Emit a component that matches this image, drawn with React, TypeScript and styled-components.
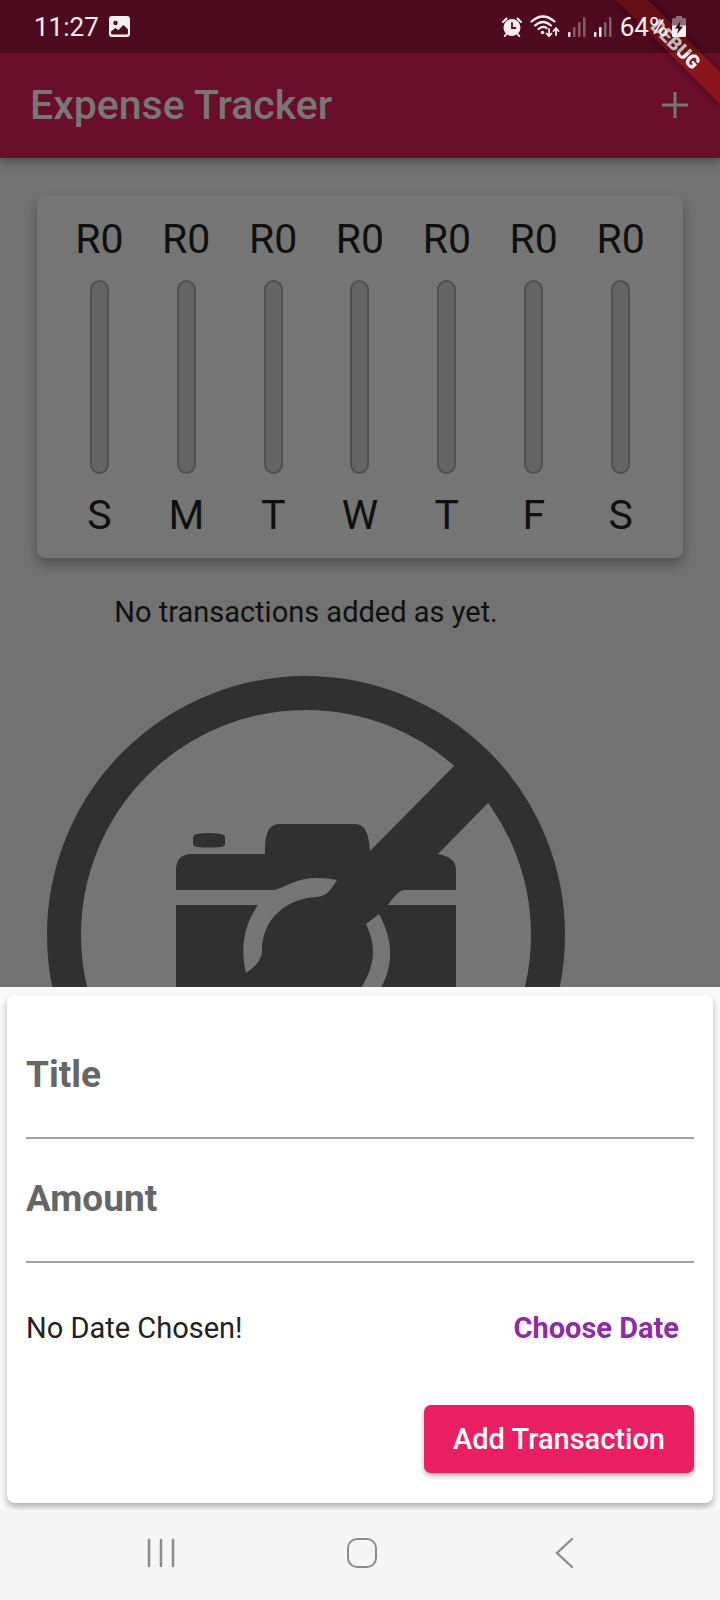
import React from "react";
import styled, { createGlobalStyle } from "styled-components";

const GlobalStyle = createGlobalStyle`
  *, *::before, *::after { box-sizing: border-box; }
  body { margin: 0; font-family: Roboto, "Liberation Sans", sans-serif; background: #727272; }
  button, input { font: inherit; }
`;

const Page = styled.div`
  display: flex;
  flex-direction: column;
  height: 100vh;
`;

const Header = styled.header`
  position: relative;
  z-index: 1;
  flex: none;
  background: #6a0e2b;
  box-shadow: 0 4px 8px rgba(0, 0, 0, 0.3);
`;

const StatusBar = styled.div`
  position: relative;
  z-index: 2;
  display: flex;
  align-items: center;
  justify-content: space-between;
  height: 53px;
  padding: 0 34px;
  background: rgba(0, 0, 0, 0.26);
  color: #fbeef2;
  font-size: 26px;
  line-height: 32px;
`;

const StatusGroup = styled.div<{ $gap: number }>`
  display: flex;
  align-items: center;
  gap: ${(p) => p.$gap}px;
`;

const StatusIcon = styled.svg`
  display: block;
  flex: none;
`;

const Battery = styled.span`
  display: flex;
  align-items: center;
  gap: 4px;
`;

const AppBar = styled.div`
  display: flex;
  align-items: center;
  justify-content: space-between;
  height: 105px;
  padding: 0 30px 2px;
  color: #777777;
`;

const AppTitle = styled.h1`
  margin: 0;
  font-size: 41px;
  line-height: 48px;
  font-weight: 500;
`;

const IconButton = styled.button`
  display: grid;
  place-items: center;
  padding: 0;
  border: 0;
  background: none;
  color: inherit;
`;

const DebugRibbon = styled.svg`
  position: absolute;
  z-index: 1;
  top: 0;
  right: 0;
  pointer-events: none;
`;

const Content = styled.main`
  flex: 1 1 0;
  min-height: 0;
  overflow: hidden;
  padding-top: 38px;
  background: #727272;
`;

const ChartCard = styled.section`
  display: grid;
  grid-template-columns: repeat(7, 1fr);
  margin: 0 37px;
  padding: 19px;
  border-radius: 8px;
  background: #757575;
  box-shadow: 0 6px 12px rgba(0, 0, 0, 0.3);
`;

const ChartColumn = styled.div`
  display: flex;
  flex-direction: column;
  align-items: center;
  gap: 17px;
`;

const ChartLabel = styled.span`
  color: #101010;
  font-size: 41px;
  line-height: 48px;
`;

const ChartBar = styled.div`
  width: 19px;
  height: 194px;
  border: 2px solid #505050;
  border-radius: 10px;
  background: #646464;
`;

const EmptyState = styled.section`
  width: 85%;
  margin-top: 34px;
`;

const EmptyText = styled.p`
  margin: 0 0 28px;
  color: #101010;
  font-size: 29px;
  line-height: 40px;
  text-align: center;
`;

const NoPhoto = styled.svg`
  display: block;
  width: 100%;
`;

const Sheet = styled.section`
  flex: none;
  padding: 8px 7px 7px;
  background: #fafafa;
  overflow: hidden;
`;

const FormCard = styled.form`
  display: flex;
  flex-direction: column;
  padding: 20px 19px 18px;
  border-radius: 8px;
  background: #ffffff;
  box-shadow: 0 4px 7px rgba(0, 0, 0, 0.3);
`;

const Field = styled.div`
  display: grid;
  height: 124px;
  border-bottom: 2px solid #a0a0a0;
`;

const FieldLabel = styled.label`
  grid-area: 1 / 1;
  align-self: center;
  padding-bottom: 2px;
  color: #666666;
  font-size: 37px;
  line-height: 44px;
  font-weight: 700;
`;

const FieldInput = styled.input`
  grid-area: 1 / 1;
  min-width: 0;
  padding: 0;
  border: 0;
  outline: 0;
  background: none;
  color: #222222;
  font-size: 37px;
`;

const DateRow = styled.div`
  display: flex;
  align-items: center;
  justify-content: space-between;
  height: 130px;
  color: #212121;
  font-size: 29px;
  line-height: 32px;
`;

const TextButton = styled.button`
  padding: 16px 15px;
  border: 0;
  background: none;
  color: #8f2aa8;
  font-weight: 700;
`;

const SubmitButton = styled.button`
  align-self: flex-end;
  height: 68px;
  margin: 12px 0;
  padding: 0 29px;
  border: 0;
  border-radius: 7px;
  background: #e91e63;
  color: #ffffff;
  font-size: 29px;
  line-height: 32px;
  font-weight: 500;
  box-shadow: 0 3px 5px rgba(0, 0, 0, 0.3);
`;

const NavBar = styled.nav`
  position: relative;
  display: grid;
  grid-template-columns: repeat(3, 1fr);
  flex: none;
  height: 90px;
  padding: 0 56px 4px 60px;
  background: #f5f5f5;
  color: #8c8c8c;
`;

const days = ["S", "M", "T", "W", "T", "F", "S"];

function SignalIcon({ level }: { level: number }) {
  const bars = [5, 10, 15, 20];
  return (
    <StatusIcon width="18" height="20" viewBox="0 0 18 20" fill="currentColor">
      {bars.map((h, i) => (
        <rect key={h} x={i * 5} y={20 - h} width="2.500" height={h} rx="1" opacity={i < level ? 1 : 0.35} />
      ))}
    </StatusIcon>
  );
}

function PhotoIcon() {
  return (
    <StatusIcon width="21" height="21" viewBox="0 0 21 21">
      <path
        fill="currentColor"
        fillRule="evenodd"
        d="M3 0H18Q21 0 21 3V18Q21 21 18 21H3Q0 21 0 18V3Q0 0 3 0ZM6.500 4.800A2.200 2.200 0 1 0 6.500 9.200A2.200 2.200 0 1 0 6.500 4.800ZM2 17Q2 18.500 3.500 18.500H17.500Q19 18.500 19 17V13.500L15.200 9.600Q14.500 9 13.800 9.600L9.300 14.200L7.300 12.400Q6.500 11.800 5.700 12.400L2 15.600Z"
      />
    </StatusIcon>
  );
}

function AlarmIcon() {
  return (
    <StatusIcon width="20" height="20" viewBox="0 0 20 20" fill="none" stroke="currentColor" strokeLinecap="round">
      <circle cx="10" cy="10.500" r="8.500" fill="currentColor" stroke="none" />
      <path d="M1 5L4.500 1.500M19 5L15.500 1.500M4 17.500L2.800 19M16 17.500L17.200 19" strokeWidth="2" />
      <path d="M10 6V11H13.500" stroke="#4e0a20" strokeWidth="1.800" />
    </StatusIcon>
  );
}

function WifiIcon() {
  return (
    <StatusIcon width="30" height="23" viewBox="0 0 30 23" fill="none" stroke="currentColor" strokeLinecap="round">
      <path d="M1.500 6.500Q13 -3.500 24.500 6.500M5 10.500Q13 3.500 21 10.500M8.500 14Q13 10.500 16.500 13" strokeWidth="2.200" />
      <circle cx="12.500" cy="17.500" r="1.800" fill="currentColor" stroke="none" />
      <path d="M19 14V21M16.500 18.500L19 21.200L21.500 18.500M26 20V13.500M23.500 16L26 13.200L28.500 16" strokeWidth="1.800" />
    </StatusIcon>
  );
}

function BatteryIcon() {
  return (
    <StatusIcon width="14" height="21" viewBox="0 0 14 21">
      <path d="M4 0H10V2H12.500Q14 2 14 3.500V19.500Q14 21 12.500 21H1.500Q0 21 0 19.500V3.500Q0 2 1.500 2H4Z" fill="#8d6b75" />
      <path d="M0 9.500H14V19.500Q14 21 12.500 21H1.500Q0 21 0 19.500Z" fill="currentColor" />
      <path d="M8.500 5L3 12.500H6.500L5 18L11 10.500H7.500Z" fill="#2b0511" />
    </StatusIcon>
  );
}

function DebugBanner() {
  return (
    <DebugRibbon width="120" height="120" viewBox="0 0 120 120">
      <defs>
        <filter id="ribbonShadow" x="-20%" y="-20%" width="140%" height="140%">
          <feGaussianBlur stdDeviation="3" />
        </filter>
      </defs>
      <path d="M15 0H49L120 71V105Z" fill="#2a0410" opacity="0.6" filter="url(#ribbonShadow)" />
      <path d="M16 0H48L120 72V104Z" fill="#8c151b" />
      <text
        transform="translate(76 44) rotate(45)"
        y="7"
        textAnchor="middle"
        fill="#ffffff"
        fontSize="19"
        fontWeight="900"
      >
        DEBUG
      </text>
    </DebugRibbon>
  );
}

function NoPhotoArt() {
  return (
    <NoPhoto viewBox="0 660 612 550" role="img" aria-label="No image available">
      <circle cx="306" cy="935" r="242" fill="#757575" stroke="#303030" strokeWidth="34" />
      <g fill="#303030">
        <path d="M193 837Q193 835 197 834Q209 832 221 834Q225 835 225 837V844Q225 846 221 847Q209 848 197 847Q193 846 193 844Z" />
        <path d="M176 890V870Q176 854 192 854H265C265 836 267 824 280 824H355C367 824 369 838 370 851L453 767L475 750L505 780L488 803L438 854Q456 857 456 870V890H404Q397 891 388 905H456V1060H270L159 1103L123 1067L176 1012V905H258Z" />
      </g>
      <g fill="#757575">
        <path d="M176 890H275C290 885 297 878 317 878Q328 878 337 880Q329 894 322 896L317 897C286 898 262 920 262 950Q262 963 246 973C240 948 244 925 258 905H176Z" />
        <path d="M366 924L379 914C393 940 394 963 381 988Q372 1003 364 1010L350 1004L361 988C377 963 375 943 366 924Z" />
      </g>
    </NoPhoto>
  );
}

export default function App() {
  return (
    <>
      <GlobalStyle />
      <Page>
        <Header>
          <StatusBar>
            <StatusGroup $gap={10}>
              <span>11:27</span>
              <PhotoIcon />
            </StatusGroup>
            <StatusGroup $gap={8}>
              <AlarmIcon />
              <WifiIcon />
              <SignalIcon level={1} />
              <SignalIcon level={2} />
              <Battery>
                <span>64%</span>
                <BatteryIcon />
              </Battery>
            </StatusGroup>
          </StatusBar>
          <AppBar>
            <AppTitle>Expense Tracker</AppTitle>
            <IconButton type="button" aria-label="Add transaction">
              <svg width="30" height="30" viewBox="0 0 30 30" stroke="currentColor" strokeWidth="3">
                <path d="M15 2V28M2 15H28" />
              </svg>
            </IconButton>
          </AppBar>
          <DebugBanner />
        </Header>
        <Content>
          <ChartCard>
            {days.map((day, i) => (
              <ChartColumn key={i}>
                <ChartLabel>R0</ChartLabel>
                <ChartBar />
                <ChartLabel>{day}</ChartLabel>
              </ChartColumn>
            ))}
          </ChartCard>
          <EmptyState>
            <EmptyText>No transactions added as yet.</EmptyText>
            <NoPhotoArt />
          </EmptyState>
        </Content>
        <Sheet>
          <FormCard onSubmit={(e) => e.preventDefault()}>
            <Field>
              <FieldLabel htmlFor="title">Title</FieldLabel>
              <FieldInput id="title" type="text" />
            </Field>
            <Field>
              <FieldLabel htmlFor="amount">Amount</FieldLabel>
              <FieldInput id="amount" type="text" inputMode="decimal" />
            </Field>
            <DateRow>
              <span>No Date Chosen!</span>
              <TextButton type="button">Choose Date</TextButton>
            </DateRow>
            <SubmitButton type="submit">Add Transaction</SubmitButton>
          </FormCard>
        </Sheet>
        <NavBar>
          <IconButton type="button" aria-label="Recent apps">
            <svg width="30" height="30" viewBox="0 0 30 30" stroke="currentColor" strokeWidth="2.500" strokeLinecap="round">
              <path d="M3 2V28M15 2V28M27 2V28" />
            </svg>
          </IconButton>
          <IconButton type="button" aria-label="Home">
            <svg width="30" height="30" viewBox="0 0 30 30" fill="none" stroke="currentColor" strokeWidth="2">
              <rect x="1" y="1" width="28" height="28" rx="9" />
            </svg>
          </IconButton>
          <IconButton type="button" aria-label="Back">
            <svg
              width="30"
              height="30"
              viewBox="0 0 30 30"
              fill="none"
              stroke="currentColor"
              strokeWidth="2.300"
              strokeLinecap="round"
            >
              <path d="M24 1L9 15L24 29" />
            </svg>
          </IconButton>
        </NavBar>
      </Page>
    </>
  );
}
